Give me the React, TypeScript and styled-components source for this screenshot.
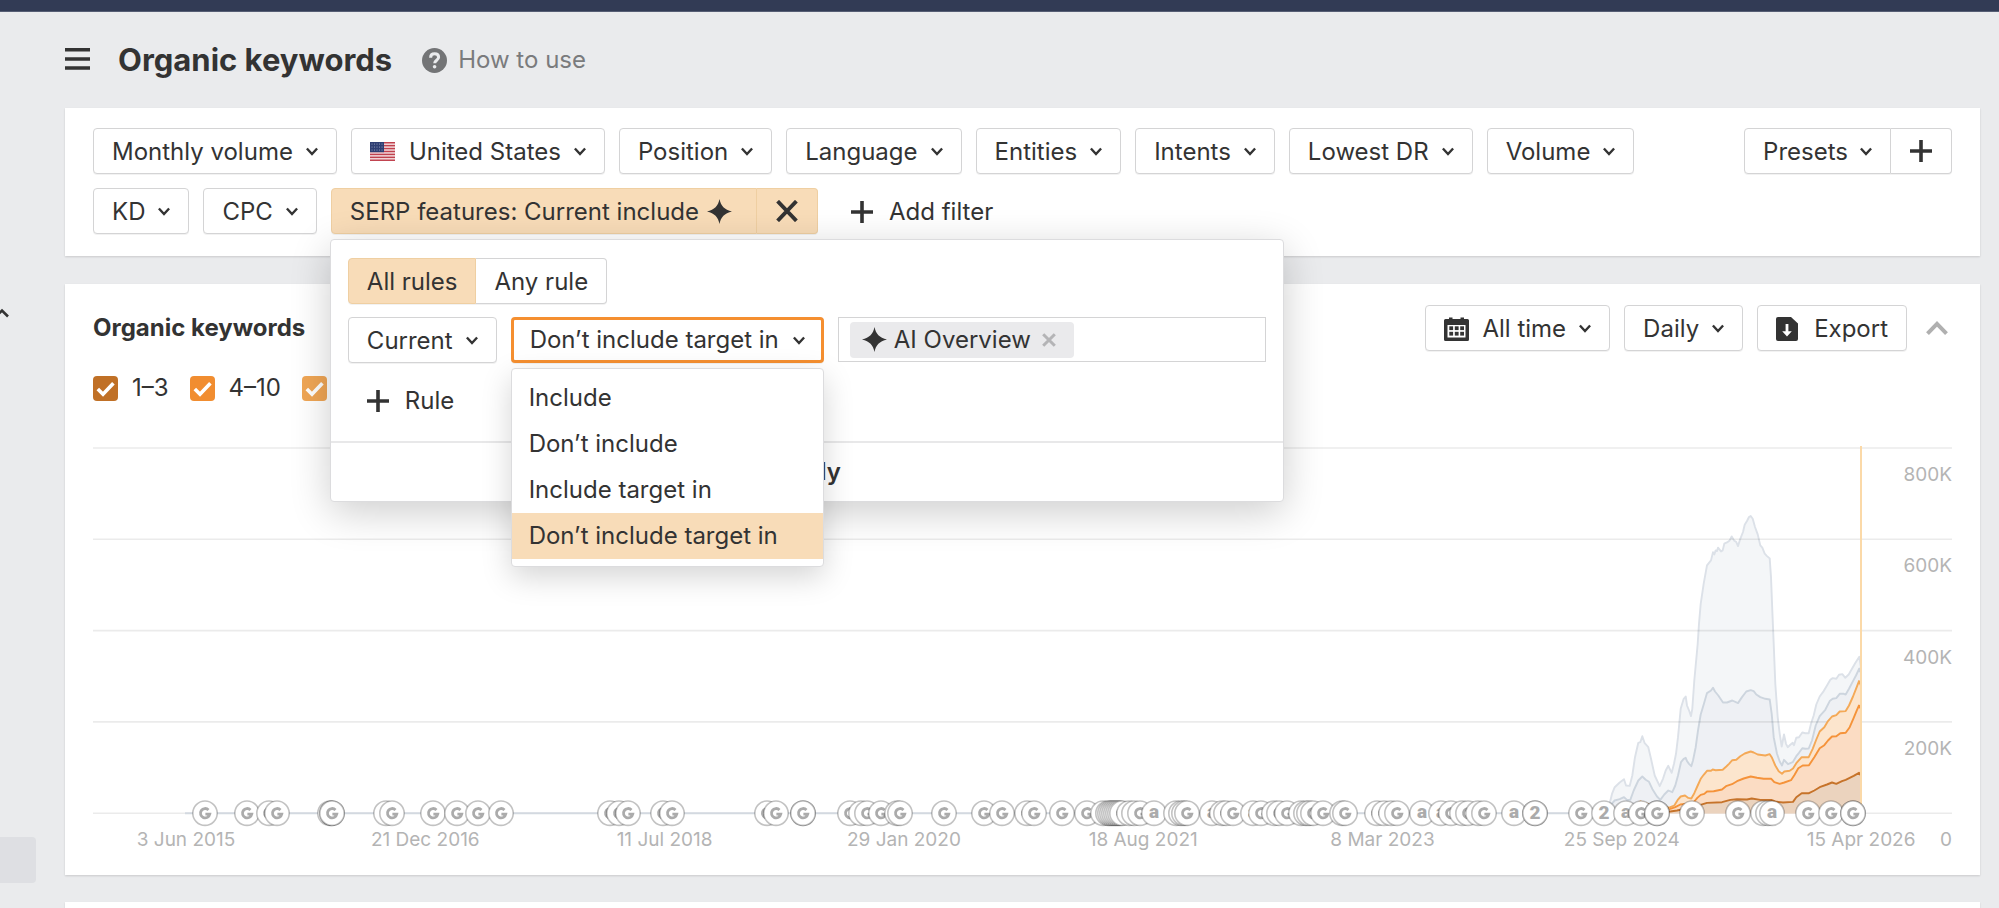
import React, { useLayoutEffect, useRef, useState } from "react";
import styled, { createGlobalStyle, css } from "styled-components";

const color = {
  ink: "#333333",
  muted: "#7a7b7d",
  faint: "#b4b4b4",
  page: "#eaebed",
  line: "#d4d4d5",
  accent: "#f58f30",
  selected: "#f8dcb8",
  selectedLine: "#efcfa2",
};

const GlobalStyle = createGlobalStyle`
  *, *::before, *::after { box-sizing: border-box; }
  body {
    margin: 0;
    background: ${color.page};
    color: ${color.ink};
    font-family: Inter, "Liberation Sans", sans-serif;
    font-size: 24px;
    line-height: 32px;
  }
  button, select, input { font: inherit; color: inherit; }
  svg { display: block; flex: none; }
`;

/* ---------- page frame ---------- */

const Page = styled.div`
  display: flex;
  flex-direction: column;
  min-height: 100vh;
`;

const TopBar = styled.div`
  height: 12px;
  flex: none;
  background: #323b55;
  border-bottom: 1px solid #565e74;
`;

const Body = styled.div`
  display: flex;
  flex: 1;
`;

const SideStrip = styled.aside`
  width: 65px;
  flex: none;
  padding-top: 295px;
`;

const SideToggle = styled.button`
  display: block;
  width: 12px;
  height: 12px;
  padding: 0;
  border: 0;
  background: none;
`;

const SideItem = styled.div`
  width: 36px;
  height: 46px;
  margin-top: 518px;
  border-radius: 0 4px 4px 0;
  background: #dedfe3;
`;

const Main = styled.main`
  display: flex;
  flex-direction: column;
  flex: 1;
  min-width: 0;
  padding-right: 19px;
`;

const Header = styled.header`
  display: flex;
  align-items: center;
  height: 96px;
`;

const MenuButton = styled.button`
  padding: 0 0 2px;
  border: 0;
  background: none;
`;

const Title = styled.h1`
  margin: 0 30px 0 28px;
  font-size: 31px;
  line-height: 40px;
  font-weight: 700;
`;

const HelpLink = styled.a`
  display: flex;
  align-items: center;
  gap: 11px;
  color: ${color.muted};
  text-decoration: none;
`;

const Panel = styled.section`
  background: #fff;
  box-shadow: 0 1px 2px rgba(0, 0, 0, 0.14);
`;

/* ---------- controls ---------- */

const boxed = css`
  height: 46px;
  border: 1px solid ${color.line};
  border-radius: 4px;
  background: #fff;
  box-shadow: 0 1px 0 rgba(0, 0, 0, 0.05);
`;

const Button = styled.button<{ $gap?: number }>`
  ${boxed}
  display: inline-flex;
  align-items: center;
  gap: ${(p) => p.$gap ?? 13}px;
  padding: 1px 18px 0;
  white-space: nowrap;
`;

const PlainButton = styled(Button)`
  border-color: transparent;
  background: none;
  box-shadow: none;
`;

const IconButton = styled.button`
  padding: 0;
  border: 0;
  background: none;
`;

const Joined = styled.div`
  display: flex;
  flex: none;
  & > :first-child { border-top-right-radius: 0; border-bottom-right-radius: 0; }
  & > :last-child { border-top-left-radius: 0; border-bottom-left-radius: 0; border-left: 0; }
`;

const PresetAdd = styled(Button)`
  padding: 0 19px;
`;

const SelectBox = styled.span`
  display: inline-grid;
  align-items: center;
  & > * { grid-area: 1 / 1; }
  & > svg { justify-self: end; margin-right: 19px; pointer-events: none; }
`;

const Select = styled.select<{ $active?: boolean }>`
  ${boxed}
  appearance: none;
  field-sizing: content;
  padding: 1px 43px 0 18px;
  outline: none;
  ${(p) =>
    p.$active &&
    css`
      border: 3px solid ${color.accent};
      padding: 0 42px 0 16px;
    `}
`;

/* ---------- filters ---------- */

const FilterPanel = styled(Panel)`
  display: flex;
  align-items: flex-start;
  gap: 26px;
  padding: 20px 28px 22px;
`;

const FilterList = styled.div`
  display: flex;
  flex-wrap: wrap;
  flex: 1;
  gap: 14px;
`;

const FlagSlot = styled.span`
  padding-right: 1px;
`;

const ActiveFilter = styled.div`
  position: relative;
  z-index: 2;
`;

const FilterChip = styled(Button)`
  gap: 8px;
  padding-right: 24px;
  border-color: ${color.selectedLine};
  background: ${color.selected};
`;

const FilterClear = styled(FilterChip)`
  padding: 0 19px;
`;

const Popover = styled.div`
  position: absolute;
  top: calc(100% + 5px);
  left: -1px;
  width: 954px;
  border: 1px solid #dcdcde;
  border-radius: 4px;
  background: #fff;
  box-shadow: 0 10px 40px rgba(0, 0, 0, 0.2);
`;

const PopoverBody = styled.div`
  display: flex;
  flex-direction: column;
  align-items: flex-start;
  gap: 13px;
  padding: 18px 17px;
`;

const ModeButton = styled(Button)<{ $on?: boolean }>`
  ${(p) =>
    p.$on &&
    css`
      border-color: ${color.selectedLine};
      background: ${color.selected};
    `}
`;

const RuleRow = styled.div`
  display: flex;
  align-self: stretch;
  gap: 14px;
  padding-bottom: 1px;
`;

const OptionAnchor = styled.div`
  position: relative;
  display: flex;
`;

const OptionList = styled.ul`
  position: absolute;
  z-index: 1;
  top: calc(100% + 5px);
  left: 0;
  right: 0;
  margin: 0;
  padding: 6px 0 7px;
  border: 1px solid #dcdcde;
  border-radius: 4px;
  background: #fff;
  box-shadow: 0 10px 30px rgba(0, 0, 0, 0.17);
  list-style: none;
`;

const Option = styled.li<{ $on?: boolean }>`
  padding: 7px 17px;
  background: ${(p) => (p.$on ? color.selected : "none")};
  white-space: nowrap;
`;

const TagField = styled.div`
  display: flex;
  align-items: center;
  flex: 1;
  min-width: 0;
  height: 45px;
  padding: 0 11px;
  border: 1px solid ${color.line};
`;

const Tag = styled.span`
  display: flex;
  align-items: center;
  gap: 7px;
  height: 36px;
  padding: 0 18px 0 12px;
  border-radius: 4px;
  background: #eaeaec;
  white-space: nowrap;
`;

const TagRemove = styled(IconButton)`
  padding-left: 4px;
`;

const TagInput = styled.input`
  flex: 1;
  min-width: 0;
  padding: 0 8px;
  border: 0;
  outline: 0;
  background: none;
`;

const ApplyButton = styled.button`
  display: block;
  width: 100%;
  height: 60px;
  border: 0;
  border-top: 2px solid #e8e8e9;
  background: none;
  font-weight: 600;
`;

/* ---------- chart card ---------- */

const ChartPanel = styled(Panel)`
  margin: 28px 0 27px;
  padding: 21px 28px 0;
`;

const ChartHeader = styled.div`
  display: flex;
  align-items: center;
  gap: 14px;
`;

const ChartTitle = styled.h2`
  flex: 1;
  margin: 0;
  font-size: 24px;
  line-height: 32px;
  font-weight: 700;
`;

const CollapseButton = styled(IconButton)`
  padding: 0 4px 0 5px;
`;

const Legend = styled.div`
  display: flex;
  gap: 21px;
  margin: 21px 0 36px;
`;

const LegendItem = styled.label`
  display: flex;
  align-items: center;
  gap: 14px;
`;

const CheckCell = styled.span`
  display: grid;
  & > * { grid-area: 1 / 1; }
  & > svg { pointer-events: none; }
`;

const Check = styled.input<{ $tone: string }>`
  appearance: none;
  width: 25px;
  height: 25px;
  margin: 0;
  border-radius: 4px;
  background: ${(p) => p.$tone};
`;

const ChartBox = styled.div`
  height: 435px;
`;

const NextPanel = styled(Panel)`
  flex: 1;
`;

/* ---------- icons ---------- */

const Chevron = () => (
  <svg width="12" height="9" viewBox="0 0 12 9" fill="none" stroke={color.ink} strokeWidth="2.4">
    <path d="M0.9 1.5 6 7 11.1 1.5" />
  </svg>
);

const Plus = () => (
  <svg width="22" height="22" viewBox="0 0 22 22" stroke={color.ink} strokeWidth="3.6">
    <path d="M11 0v22M0 11h22" />
  </svg>
);

const Cross = () => (
  <svg width="22" height="22" viewBox="0 0 22 22" stroke={color.ink} strokeWidth="3.9">
    <path d="M1.6 1.2 20.4 20.8M20.4 1.2 1.6 20.8" />
  </svg>
);

const Sparkle = () => (
  <svg width="25" height="25" viewBox="0 0 25 25" fill={color.ink}>
    <path d="M12.5 0C13.9 7.2 17.4 10.6 25 12.5 17.4 14.4 13.9 17.8 12.5 25 11.1 17.8 7.6 14.4 0 12.5 7.6 10.6 11.1 7.2 12.5 0Z" />
  </svg>
);

const Flag = () => (
  <svg width="25" height="19" viewBox="0 0 25 19">
    <rect width="25" height="19" fill="#f3dcdf" />
    {[0, 1, 2, 3, 4, 5, 6].map((i) => (
      <rect key={i} y={i * 2.92} width="25" height="1.46" fill="#c0424e" />
    ))}
    <rect width="14" height="10.2" fill="#2f3f73" />
    {[2, 5, 8].map((y) =>
      [2, 4.5, 7, 9.5, 12].map((x) => <circle key={`${x}-${y}`} cx={x} cy={y} r="0.5" fill="#aab2cd" />),
    )}
  </svg>
);

const Calendar = () => (
  <svg width="25" height="24" viewBox="0 0 25 24" fill={color.ink}>
    <path d="M1.5 2H5V.5h3.5V2h8V.5H20V2h3.5A1.5 1.5 0 0 1 25 3.5v19a1.5 1.5 0 0 1-1.5 1.5h-22A1.5 1.5 0 0 1 0 22.500V3.500A1.500 1.500 0 0 1 1.500 2Z" />
    <rect x="3.5" y="8" width="18" height="12.5" fill="#fff" />
    {[9.3, 14.8].map((y) => [5.3, 10.8, 16.2].map((x) => <rect key={`${x}-${y}`} x={x} y={y} width="3.8" height="3.8" />))}
  </svg>
);

const ExportIcon = () => (
  <svg width="22" height="24" viewBox="0 0 22 24">
    <path fill={color.ink} d="M2 0h13l7 6.5V22a2 2 0 0 1-2 2H2a2 2 0 0 1-2-2V2a2 2 0 0 1 2-2Z" />
    <path fill="#fff" d="M9.600 7h2.800v7.200h3.400L11 19.600l-4.800-5.400h3.400Z" />
  </svg>
);

const Menu = () => (
  <svg width="25" height="22" viewBox="0 0 25 22" fill={color.ink}>
    <path d="M0 0h25v3.600H0zM0 9.200h25v3.600H0zM0 18.200h25v3.600H0z" />
  </svg>
);

const Help = () => (
  <svg width="25" height="25" viewBox="0 0 25 25" fill="none">
    <circle cx="12.5" cy="12.5" r="12.5" fill="#737476" />
    <path d="M8.600 9.700C8.600 7.200 10.200 5.800 12.600 5.800s4 1.400 4 3.500c0 3-3.900 3-3.900 6" stroke="#eaebed" strokeWidth="3" />
    <circle cx="12.6" cy="18.8" r="1.8" fill="#eaebed" />
  </svg>
);

const SmallCross = () => (
  <svg width="14" height="14" viewBox="0 0 14 14" stroke="#b4b4b6" strokeWidth="3">
    <path d="M1.200 1.200 12.800 12.800M12.800 1.200 1.200 12.800" />
  </svg>
);

const Collapse = () => (
  <svg width="22" height="14" viewBox="0 0 22 14" fill="none" stroke="#b0b0b0" strokeWidth="4">
    <path d="M1.500 12.600 11 2.900 20.500 12.600" />
  </svg>
);

const Tick = () => (
  <svg width="25" height="25" viewBox="0 0 25 25" fill="none" stroke="#fff" strokeWidth="3.6">
    <path d="M4.800 13 10 18.200 20.400 7.200" />
  </svg>
);

/* ---------- chart ---------- */

type Sample = [x: number, y: number];

// Sample x is in thirds of a chart unit and ends at SAMPLE_END, the last day.
// Sample y is SAMPLE_TOP on the 800K line and SAMPLE_FLOOR at zero.
const SAMPLE_TOP = 53;
const SAMPLE_FLOOR = 1148;
const SAMPLE_END = 902;

const parse = (text: string): Sample[] => text.split(" ").map((p) => p.split(",").map(Number) as Sample);

const SERIES = [
  {
    stroke: "#dce1e8",
    fill: "#f4f6f8",
    data: parse(
      "148,1118 155,1090 163,1070 178,1056 191,1046 197,1065 208,1066 216,1035 224,980 234,937 240,935 246,917 253,938 264,950 272,985 283,1035 298,1067 308,1045 316,1020 324,1006 334,1027 341,1000 347,970 353,920 361,835 370,805 376,798 380,825 388,845 392,857 396,835 402,750 412,640 416,580 421,520 430,460 440,405 452,390 458,365 462,372 466,360 470,362 473,352 482,363 487,360 492,340 500,336 508,330 514,318 521,330 528,335 533,347 539,328 548,305 553,283 560,272 566,260 571,257 577,265 584,290 592,312 600,345 606,352 613,370 620,377 628,384 632,440 636,540 640,640 645,760 652,860 658,910 664,948 671,912 677,940 682,950 690,943 697,937 701,944 708,922 716,920 726,906 735,908 745,908 752,880 760,855 768,822 778,798 790,782 800,765 810,748 817,743 828,745 836,733 846,731 855,742 865,732 875,715 885,698 897,679 902,712",
    ),
  },
  {
    stroke: "#cdd5de",
    fill: "#eef0f4",
    data: parse(
      "150,1125 163,1110 178,1106 191,1100 200,1108 210,1108 220,1080 234,1050 246,1038 256,1048 266,1054 276,1075 290,1098 300,1108 312,1092 324,1080 336,1085 345,1065 353,1035 362,995 370,985 376,982 380,992 386,1000 393,1007 398,990 406,950 413,900 421,852 430,822 440,788 452,780 458,772 464,783 474,795 488,816 500,816 516,810 533,818 545,800 558,783 571,779 580,782 588,792 600,800 615,805 628,807 634,850 640,920 650,970 658,993 665,1005 671,988 683,1001 697,995 708,977 716,967 726,953 735,955 745,954 755,930 766,885 778,857 795,838 808,812 817,805 828,803 838,790 850,790 856,792 866,775 878,752 887,735 897,714 902,728",
    ),
  },
  {
    stroke: "#f4a957",
    fill: "#fce5cd",
    data: parse(
      "230,1120 240,1113 262,1120 290,1132 330,1130 342,1125 352,1108 361,1098 374,1095 384,1102 393,1104 402,1088 412,1065 421,1045 430,1033 440,1021 452,1021 457,1017 466,1019 487,1018 498,1008 506,1000 516,989 528,988 540,977 553,969 571,963 580,966 592,972 615,975 628,971 634,980 645,1005 655,1022 665,1030 672,1023 688,1021 698,1014 708,998 724,980 745,980 757,955 768,927 778,903 792,890 803,872 815,858 828,854 838,843 856,842 866,825 878,798 887,775 896,752 902,765",
    ),
  },
  {
    stroke: "#f5933a",
    fill: "#fbdcc3",
    data: parse(
      "240,1130 290,1138 330,1135 345,1130 360,1122 374,1120 390,1120 402,1113 411,1102 421,1093 432,1090 440,1083 460,1082 485,1077 497,1067 515,1061 530,1052 550,1044 571,1038 590,1042 610,1045 633,1045 642,1055 658,1060 672,1056 692,1049 702,1034 714,1013 727,1005 746,1004 762,980 778,953 792,944 803,930 815,918 828,917 840,908 856,907 868,890 880,862 890,838 896,825 902,836",
    ),
  },
  {
    stroke: "#c6732a",
    fill: "#ebd3be",
    data: parse(
      "290,1144 330,1143 350,1140 380,1133 411,1126 440,1117 485,1115 510,1108 530,1106 560,1107 574,1104 600,1108 633,1108 645,1113 668,1116 698,1114 708,1100 724,1088 746,1088 762,1080 778,1070 800,1062 815,1056 828,1060 845,1052 856,1048 880,1036 896,1027 902,1036",
    ),
  },
];

// Google updates (g), Ahrefs releases (a) and grouped events (2) along the timeline.
const MARKERS = (
  "g112 g154 g176 g184 g237 g239 g239 g293 g299 g340 g364 g385 g408 g517 g526 g535 g570 g579 g674 g683 " +
  "g710 g710 g757 g768 g774 g788 g804 g807 g851 g891 g909 g934 g941 g969 g994 a1010 g1015 g1017 g1019 g1021 g1023 " +
  "g1025 g1027 g1029 g1036 g1041 g1047 a1061 g1083 g1088 g1091 g1094 a1119 g1129 g1133 g1140 a1160 g1168 g1181 " +
  "g1186 g1194 g1208 g1213 g1216 g1220 g1230 g1249 g1252 g1284 g1291 g1298 g1304 a1329 a1348 g1358 g1369 g1375 " +
  "g1385 g1391 a1421 21442 21442 g1488 21511 a1533 g1548 g1564 g1564 g1599 g1645 g1670 g1675 a1679 g1715 g1738 g1760 g1760"
)
  .split(" ")
  .map((m) => ({ kind: m[0], at: Number(m.slice(1)) }));

const DATES = ["3 Jun 2015", "21 Dec 2016", "11 Jul 2018", "29 Jan 2020", "18 Aug 2021", "8 Mar 2023", "25 Sep 2024", "15 Apr 2026"];
const LEVELS = ["800K", "600K", "400K", "200K", "0"];

const SPAN = 1768;
const AXIS = 91;
const TOP = 8;
const STEP = 91.3;
const FLOOR = TOP + STEP * 4;

const AxisText = styled.text`
  fill: ${color.faint};
  font-size: 19px;
`;

const MarkerText = styled.text`
  fill: #ababab;
  font-family: Roboto, sans-serif;
  font-size: 19px;
  font-weight: 900;
  text-anchor: middle;
`;

const Marker = ({ kind, x }: { kind: string; x: number }) => (
  <g transform={`translate(${x} ${FLOOR})`}>
    <circle r="12.2" fill="#fff" stroke="#000" strokeOpacity="0.24" strokeWidth="1.6" />
    {kind === "g" ? (
      <path d="M3.5 -3.3A4.7 4.7 0 1 0 4.8 0.9H0.4" fill="none" stroke="#ababab" strokeWidth="2.8" />
    ) : (
      <MarkerText y={kind === "a" ? 5 : 6}>{kind}</MarkerText>
    )}
  </g>
);

const KeywordChart = () => {
  const box = useRef<HTMLDivElement>(null);
  const [width, setWidth] = useState(SPAN + AXIS);

  useLayoutEffect(() => {
    const node = box.current;
    if (!node) return;
    const measure = () => setWidth(node.clientWidth);
    measure();
    const observer = new ResizeObserver(measure);
    observer.observe(node);
    return () => observer.disconnect();
  }, []);

  const k = (width - AXIS) / SPAN;
  const px = (x: number) => (SPAN - (SAMPLE_END - x) / 3) * k;
  const py = (y: number) => TOP + ((y - SAMPLE_TOP) / (SAMPLE_FLOOR - SAMPLE_TOP)) * (FLOOR - TOP);
  const line = (data: Sample[]) =>
    `M${px(data[0][0] - 4)} ${FLOOR}` + data.map(([x, y]) => `L${px(x).toFixed(1)} ${py(y).toFixed(1)}`).join("");

  const layer = (s: (typeof SERIES)[number]) => (
    <g key={s.stroke}>
      <path d={`${line(s.data)}V${FLOOR}Z`} fill={s.fill} />
      <path d={line(s.data)} fill="none" stroke={s.stroke} strokeWidth="1.9" strokeLinejoin="round" />
    </g>
  );

  return (
    <ChartBox ref={box}>
      <svg width={width} height="435" role="img" aria-label="Organic keywords over time">
        {SERIES.slice(0, 2).map(layer)}
        {LEVELS.map((_, i) => (
          <path key={i} d={`M0 ${TOP + STEP * i}H${width}`} stroke="#000" strokeOpacity="0.08" strokeWidth="1.6" />
        ))}
        {SERIES.slice(2).map(layer)}
        <path d={`M${92 * k} ${FLOOR}H${px(150)}`} stroke="#d3d9e0" strokeWidth="2" />
        <path d={`M${SPAN * k} ${TOP - 2}V${FLOOR}`} stroke="#fbd9a8" strokeWidth="2" />
        {MARKERS.map((m, i) => (
          <Marker key={i} kind={m.kind} x={m.at * k} />
        ))}
        {LEVELS.map((label, i) => (
          <AxisText key={label} x={width} y={TOP + STEP * i + 33} textAnchor="end">
            {label}
          </AxisText>
        ))}
        {DATES.map((label, i) => (
          <AxisText key={label} x={(93 + 239.3 * i) * k} y={FLOOR + 33} textAnchor="middle">
            {label}
          </AxisText>
        ))}
      </svg>
    </ChartBox>
  );
};

/* ---------- page ---------- */

const FILTERS = ["Monthly volume", "United States", "Position", "Language", "Entities", "Intents", "Lowest DR", "Volume", "KD", "CPC"];
const OPTIONS = ["Include", "Don’t include", "Include target in", "Don’t include target in"];
const RANGES = [
  { label: "1–3", tone: "#c07026" },
  { label: "4–10", tone: "#f18d30" },
  { label: "11–20", tone: "#f0a655" },
];

export default function App() {
  const [target, setTarget] = useState(OPTIONS[3]);

  return (
    <Page>
      <GlobalStyle />
      <TopBar />
      <Body>
        <SideStrip>
          <SideToggle aria-label="Collapse group">
            <svg width="12" height="12" viewBox="0 0 12 12" fill="none" stroke={color.ink} strokeWidth="2.6">
              <path d="M-4 9.500 2 3.500 8 9.500" />
            </svg>
          </SideToggle>
          <SideItem />
        </SideStrip>
        <Main>
          <Header>
            <MenuButton aria-label="Menu">
              <Menu />
            </MenuButton>
            <Title>Organic keywords</Title>
            <HelpLink href="#help">
              <Help />
              How to use
            </HelpLink>
          </Header>

          <FilterPanel>
            <FilterList>
              {FILTERS.map((name) => (
                <Button key={name} aria-haspopup="dialog">
                  {name === "United States" && (
                    <FlagSlot>
                      <Flag />
                    </FlagSlot>
                  )}
                  {name}
                  <Chevron />
                </Button>
              ))}
              <ActiveFilter>
                <Joined>
                  <FilterChip aria-expanded="true">
                    SERP features: Current include
                    <Sparkle />
                  </FilterChip>
                  <FilterClear aria-label="Clear filter">
                    <Cross />
                  </FilterClear>
                </Joined>
                <Popover role="dialog" aria-label="SERP features">
                  <PopoverBody>
                    <Joined>
                      <ModeButton $on aria-pressed="true">
                        All rules
                      </ModeButton>
                      <ModeButton aria-pressed="false">Any rule</ModeButton>
                    </Joined>
                    <RuleRow>
                      <SelectBox>
                        <Select aria-label="Period" defaultValue="Current">
                          <option>Current</option>
                        </Select>
                        <Chevron />
                      </SelectBox>
                      <OptionAnchor>
                        <SelectBox>
                          <Select $active aria-label="Condition" value={target} onChange={(e) => setTarget(e.target.value)}>
                            {OPTIONS.map((o) => (
                              <option key={o}>{o}</option>
                            ))}
                          </Select>
                          <Chevron />
                        </SelectBox>
                        <OptionList role="listbox" aria-label="Condition">
                          {OPTIONS.map((o) => (
                            <Option key={o} role="option" aria-selected={o === target} $on={o === target} onClick={() => setTarget(o)}>
                              {o}
                            </Option>
                          ))}
                        </OptionList>
                      </OptionAnchor>
                      <TagField>
                        <Tag>
                          <Sparkle />
                          AI Overview
                          <TagRemove aria-label="Remove AI Overview">
                            <SmallCross />
                          </TagRemove>
                        </Tag>
                        <TagInput aria-label="Feature" />
                      </TagField>
                    </RuleRow>
                    <PlainButton $gap={16}>
                      <Plus />
                      Rule
                    </PlainButton>
                  </PopoverBody>
                  <ApplyButton>Apply</ApplyButton>
                </Popover>
              </ActiveFilter>
              <PlainButton $gap={16}>
                <Plus />
                Add filter
              </PlainButton>
            </FilterList>
            <Joined>
              <Button $gap={12} aria-haspopup="menu">
                Presets
                <Chevron />
              </Button>
              <PresetAdd aria-label="Save preset">
                <Plus />
              </PresetAdd>
            </Joined>
          </FilterPanel>

          <ChartPanel>
            <ChartHeader>
              <ChartTitle>Organic keywords</ChartTitle>
              <Button aria-haspopup="dialog">
                <Calendar />
                All time
                <Chevron />
              </Button>
              <SelectBox>
                <Select aria-label="Interval" defaultValue="Daily">
                  <option>Daily</option>
                </Select>
                <Chevron />
              </SelectBox>
              <Button $gap={16}>
                <ExportIcon />
                Export
              </Button>
              <CollapseButton aria-label="Collapse chart">
                <Collapse />
              </CollapseButton>
            </ChartHeader>
            <Legend>
              {RANGES.map((r) => (
                <LegendItem key={r.label}>
                  <CheckCell>
                    <Check type="checkbox" defaultChecked $tone={r.tone} />
                    <Tick />
                  </CheckCell>
                  {r.label}
                </LegendItem>
              ))}
            </Legend>
            <KeywordChart />
          </ChartPanel>

          <NextPanel />
        </Main>
      </Body>
    </Page>
  );
}
